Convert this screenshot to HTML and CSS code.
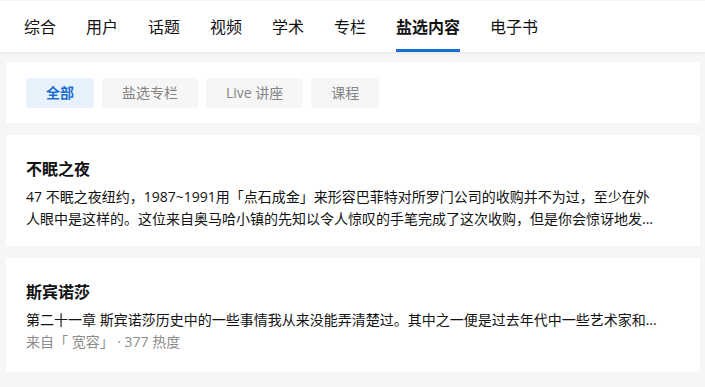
FILE: index.html
```html
<!DOCTYPE html>
<html lang="zh-CN">
<head>
<meta charset="utf-8">
<link rel="stylesheet" href="styles.css">
</head>
<body>
<nav class="nav">
  <a class="tab">综合</a>
  <a class="tab">用户</a>
  <a class="tab">话题</a>
  <a class="tab">视频</a>
  <a class="tab">学术</a>
  <a class="tab">专栏</a>
  <a class="tab active">盐选内容</a>
  <a class="tab">电子书</a>
</nav>
<main class="main">
  <section class="card filters">
    <span class="chip on">全部</span>
    <span class="chip">盐选专栏</span>
    <span class="chip">Live 讲座</span>
    <span class="chip">课程</span>
  </section>
  <article class="card item">
    <h2 class="title">不眠之夜</h2>
    <p class="excerpt"><span class="line">47 不眠之夜纽约，1987~1991用「点石成金」来形容巴菲特对所罗门公司的收购并不为过，至少在外</span><span class="line">人眼中是这样的。这位来自奥马哈小镇的先知以令人惊叹的手笔完成了这次收购，但是你会惊讶地发...</span></p>
  </article>
  <article class="card item item2">
    <h2 class="title">斯宾诺莎</h2>
    <p class="excerpt"><span class="line">第二十一章 斯宾诺莎历史中的一些事情我从来没能弄清楚过。其中之一便是过去年代中一些艺术家和...</span></p>
    <p class="meta">来自「 宽容」 · 377 热度</p>
  </article>
</main>
</body>
</html>
```

FILE: styles.css
```css
* { box-sizing: border-box; }
html, body { margin: 0; padding: 0; }
body {
  background: #f6f6f6;
  font-family: "Open Sans", "Noto Sans CJK SC", sans-serif;
  color: #121212;
  width: 705px;
  height: 387px;
  overflow: hidden;
}
.nav {
  height: 52px;
  background: #fff;
  display: flex;
  gap: 30px;
  padding: 0 0 0 24px;
  box-shadow: 0 1px 3px rgba(18,18,18,0.08);
  border-top: 1px solid #f3f3f3;
}
.tab {
  font-size: 16px;
  line-height: 50px;
  height: 51px;
  color: #121212;
  border-bottom: 3px solid transparent;
  padding-top: 1px;
}
.tab.active {
  font-weight: 700;
  border-bottom-color: #1a6fd0;
}
.main {
  padding: 10px 5px 0 6px;
  display: flex;
  flex-direction: column;
  gap: 12px;
}
.card {
  background: #fff;
}
.filters {
  display: flex;
  gap: 8px;
  padding: 16px 20px 15px;
}
.chip {
  height: 30px;
  line-height: 30px;
  padding: 0 20px;
  font-size: 14px;
  color: #858585;
  background: #f6f6f6;
  border-radius: 3px;
}
.chip.on {
  background: #e8f2fd;
  color: #1a6fd0;
  font-weight: 700;
}
.item {
  padding: 22px 20px 16px;
}
.item2 {
  padding-bottom: 19px;
}
.title {
  margin: 0 0 5px;
  font-size: 16px;
  line-height: 24px;
  font-weight: 700;
  color: #121212;
}
.excerpt {
  margin: 0;
  font-size: 14px;
  line-height: 22px;
  color: #121212;
}
.line {
  display: block;
  white-space: nowrap;
  overflow: hidden;
}
.meta {
  margin: 0;
  font-size: 14px;
  line-height: 22px;
  color: #8c8c8c;
}
```
